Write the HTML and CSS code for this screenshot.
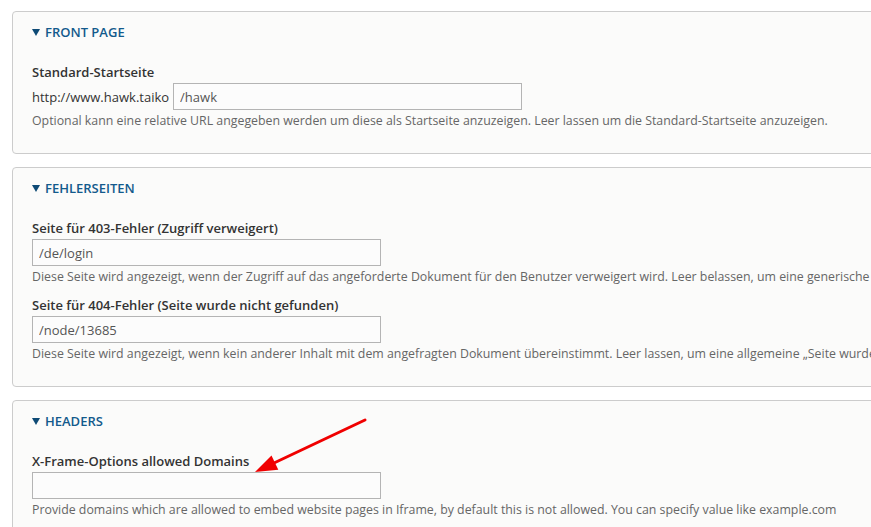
FILE: index.html
```html
<!DOCTYPE html>
<html lang="de">
<head>
    <meta charset="UTF-8">
    <meta name="viewport" content="width=device-width, initial-scale=1.0">
    <title>Website-Informationen</title>
    <link rel="stylesheet" href="styles.css">
</head>
<body>

<div class="page">
    <section class="fieldset">
        <div class="legend"><span class="toggle"></span>Front page</div>
        <div class="form-item">
            <label for="site-frontpage">Standard-Startseite</label>
            <div class="field-row">
                <span class="field-prefix">http://www.hawk.taiko</span>
                <input type="text" id="site-frontpage" class="text-input" value="/hawk">
            </div>
            <div class="description">Optional kann eine relative URL angegeben werden um diese als Startseite anzuzeigen. Leer lassen um die Standard-Startseite anzuzeigen.</div>
        </div>
    </section>

    <section class="fieldset">
        <div class="legend"><span class="toggle"></span>Fehlerseiten</div>
        <div class="form-item">
            <label for="site-403">Seite für 403-Fehler (Zugriff verweigert)</label>
            <input type="text" id="site-403" class="text-input" value="/de/login">
            <div class="description">Diese Seite wird angezeigt, wenn der Zugriff auf das angeforderte Dokument für den Benutzer verweigert wird. Leer belassen, um eine generische „Zugriff verweigert“-Seite anzuzeigen.</div>
        </div>
        <div class="form-item">
            <label for="site-404">Seite für 404-Fehler (Seite wurde nicht gefunden)</label>
            <input type="text" id="site-404" class="text-input" value="/node/13685">
            <div class="description">Diese Seite wird angezeigt, wenn kein anderer Inhalt mit dem angefragten Dokument übereinstimmt. Leer lassen, um eine allgemeine „Seite wurde nicht gefunden“-Seite anzuzeigen.</div>
        </div>
    </section>

    <section class="fieldset">
        <div class="legend"><span class="toggle"></span>Headers</div>
        <div class="form-item">
            <label for="xframe-domains">X-Frame-Options allowed Domains</label>
            <input type="text" id="xframe-domains" class="text-input" value="">
            <div class="description">Provide domains which are allowed to embed website pages in Iframe, by default this is not allowed. You can specify value like example.com</div>
        </div>
        <!-- red pointer drawn over the field -->
        <svg class="pointer" width="120" height="60" viewBox="0 0 120 60">
            <line x1="113" y1="4" x2="22" y2="47" stroke="#f00000" stroke-width="3" stroke-linecap="round"/>
            <polygon points="3,56 19.5,39.4 26.3,53.8" fill="#f00000"/>
        </svg>
    </section>
</div>

</body>
</html>
```

FILE: styles.css
```css
html, body {
    overflow: hidden;
}

body {
    margin: 0;
    background: #fff;
    font-family: "Open Sans", "Noto Sans", Arial, sans-serif;
    font-size: 13px;
    color: #333;
}

.page {
    width: 1100px;
    padding: 11px 0 0 12px;
    display: flex;
    flex-direction: column;
    gap: 13px;
}

.fieldset {
    position: relative;
    background: #fbfbfa;
    border: 1px solid #ccc;
    border-radius: 4px;
    padding: 11px 19px 23px 19px;
}

.legend {
    font-size: 13px;
    font-weight: 600;
    line-height: 18px;
    text-transform: uppercase;
    color: #135a8c;
    margin-bottom: 22px;
    display: flex;
    align-items: center;
}

/* open-state arrow in front of the legend */
.toggle {
    width: 0;
    height: 0;
    border-left: 4.5px solid transparent;
    border-right: 4.5px solid transparent;
    border-top: 7px solid #0e4a75;
    margin-right: 5px;
}

.form-item + .form-item {
    margin-top: 10px;
}

.form-item label {
    display: block;
    font-weight: 600;
    line-height: 18px;
    margin-bottom: 2px;
    color: #333;
}

.field-row {
    display: flex;
    align-items: center;
    gap: 4px;
}

.field-prefix {
    color: #333;
}

.text-input {
    box-sizing: border-box;
    display: block;
    width: 349px;
    height: 27px;
    margin: 0;
    padding: 0 6px;
    border: 1px solid #b4b4b4;
    border-radius: 0;
    background: #fcfcfc;
    font-family: inherit;
    font-size: 13px;
    color: #555;
    outline: none;
}

.description {
    font-size: 12.35px;
    line-height: 18px;
    color: #666;
    margin-top: 2px;
    white-space: nowrap;
}

.pointer {
    position: absolute;
    left: 239px;
    top: 15px;
}
```
